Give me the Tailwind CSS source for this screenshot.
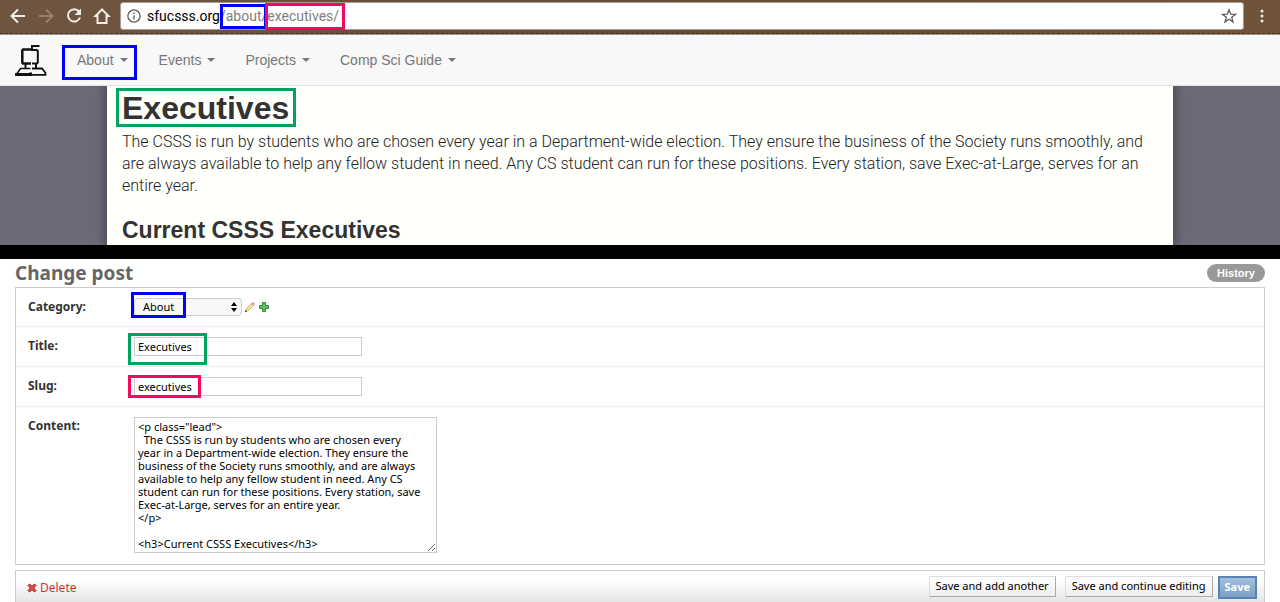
<!DOCTYPE html>
<html lang="en">
<head>
<meta charset="utf-8">
<meta name="viewport" content="width=device-width, initial-scale=1">
<title>Executives</title>
<script src="https://cdn.jsdelivr.net/npm/@tailwindcss/browser@4"></script>
</head>
<body class="flex min-h-screen flex-col bg-white font-['Liberation_Sans',Arial,sans-serif]">

<!-- Browser toolbar -->
<header class="relative flex h-[35px] shrink-0 items-start bg-linear-to-r from-[#705540] via-[#664c36] to-[#705339] pt-[2px] pr-3 pl-2">
  <div class="absolute inset-x-0 bottom-[1px] border-t border-dashed border-[#463322]"></div>
  <div class="absolute inset-x-0 bottom-0 h-px bg-[#a39586]"></div>
  <div class="flex h-7 w-[112px] items-center gap-2">
    <button aria-label="Back" class="size-5"><svg viewBox="0 0 20 20" class="size-5" fill="none" stroke="#f1ece6" stroke-width="2"><path d="M17 10H4M10 3.500 3.500 10l6.500 6.500"/></svg></button>
    <button aria-label="Forward" class="size-5"><svg viewBox="0 0 20 20" class="size-5" fill="none" stroke="#95816d" stroke-width="2"><path d="M3 10h13M10 3.500l6.500 6.500-6.500 6.500"/></svg></button>
    <button aria-label="Reload" class="size-5"><svg viewBox="0 0 20 20" class="size-5" fill="none" stroke="#f1ece6" stroke-width="2"><path d="M15 5.500A6.200 6.200 0 1 0 16 11.500"/><path d="M17 2.500v6.500h-6.500z" fill="#f1ece6" stroke="none"/></svg></button>
    <button aria-label="Home" class="size-5"><svg viewBox="0 0 20 20" class="size-5" fill="none" stroke="#f1ece6" stroke-width="2"><path d="M10 3.500 3.500 10H5.500v7h9v-7h2z"/></svg></button>
  </div>
  <div class="flex h-7 flex-1 items-center rounded-[3px] border border-[#a79c91] bg-white px-[6px] font-[Roboto,sans-serif] text-[14px] leading-5 text-[#808080]">
    <svg viewBox="0 0 16 16" class="mr-[6px] size-[14px]" fill="none" stroke="#5a5a5a" stroke-width="1.500"><circle cx="8" cy="8" r="7"/><path d="M8 7v5M8 3.800v1.800"/></svg>
    <span class="text-black">sfucsss.org</span>
    <span class="relative">/about/<span class="absolute -top-[2px] right-0 -bottom-[3px] left-0 border-3 border-[#0000ff]"></span></span>
    <span class="relative">executives/<span class="absolute -top-[3px] -right-[6px] -bottom-[4px] -left-[2px] border-3 border-[#f5085f]"></span></span>
    <button aria-label="Bookmark" class="ml-auto size-4"><svg viewBox="0 0 16 16" class="size-4" fill="none" stroke="#5a5a5a" stroke-width="1.300"><path d="m8 1.800 1.700 4.400 4.700.2-3.700 2.900 1.300 4.600L8 11.300l-4 2.600 1.300-4.600L1.600 6.400l4.700-.2z"/></svg></button>
  </div>
  <button aria-label="Menu" class="ml-3 flex h-7 w-3 items-center justify-center"><svg viewBox="0 0 4 14" class="h-[14px] w-1" fill="#f1ece6"><circle cx="2" cy="2" r="1.500"/><circle cx="2" cy="7" r="1.500"/><circle cx="2" cy="12" r="1.500"/></svg></button>
</header>

<!-- Site navigation -->
<nav class="flex h-[51px] shrink-0 items-center border-b border-[#e2e2e2] bg-[#f8f8f8] pl-[15px] text-sm text-[#777]">
  <a href="#" aria-label="Home page" class="mr-[15px]"><svg viewBox="0 0 32 32" class="size-8" fill="none" stroke="#111"><path d="M16 5.500H8L7.300 6.500v12l.7 1H16" stroke-width="2.500"/><path d="M24.500 2H17v4h4.800l1 1V18.500l-1 1H17" stroke-width="2"/><path d="M10.500 20v4M21 20v4" stroke-width="2"/><path d="M15.500 24.500H5.500L2 29.500" stroke-width="1.500"/><path d="M0 30.500h15.500v-2" stroke-width="3"/><path d="M17 24.500H27l3.500 4.500V30.800H17" stroke-width="1.800"/></svg></a>
  <a href="#" class="relative mr-[31px] ml-[15px] flex items-center gap-[6px]">About<svg viewBox="0 0 8 4" class="h-1 w-2 fill-[#777]"><path d="M0 0h8L4 4z"/></svg><span class="absolute -top-[5px] -right-[9px] -bottom-[10px] -left-[15px] border-3 border-[#0000ff]"></span></a>
  <a href="#" class="mr-[30px] flex items-center gap-[6px]">Events<svg viewBox="0 0 8 4" class="h-1 w-2 fill-[#777]"><path d="M0 0h8L4 4z"/></svg></a>
  <a href="#" class="mr-[30px] flex items-center gap-[6px]">Projects<svg viewBox="0 0 8 4" class="h-1 w-2 fill-[#777]"><path d="M0 0h8L4 4z"/></svg></a>
  <a href="#" class="flex items-center gap-[6px]">Comp Sci Guide<svg viewBox="0 0 8 4" class="h-1 w-2 fill-[#777]"><path d="M0 0h8L4 4z"/></svg></a>
</nav>

<!-- Published page -->
<section class="h-[159px] shrink-0 overflow-hidden bg-[#6b6a77] px-[107px]">
  <div class="h-full bg-[#fffffb] px-[15px] pt-[3px] text-[#333] shadow-[0_0_10px_2px_rgba(40,40,50,0.6)]">
    <h1 class="relative w-fit text-[32px] leading-[38px] font-bold">Executives<span class="absolute -top-px -right-[7px] bottom-0 -left-[6px] border-3 border-[#00a35e]"></span></h1>
    <p class="mt-1 font-[Roboto,sans-serif] text-[16px] leading-[22px] font-light text-[#222]">The CSSS is run by students who are chosen every year in a Department-wide election. They ensure the business of the Society runs smoothly, and<br>are always available to help any fellow student in need. Any CS student can run for these positions. Every station, save Exec-at-Large, serves for an<br>entire year.</p>
    <h3 class="mt-[19px] text-[23px] leading-7 font-bold">Current CSSS Executives</h3>
  </div>
</section>
<div class="h-[14px] shrink-0 bg-black"></div>

<!-- Post editor -->
<main class="flex flex-1 flex-col px-[15px] font-['Noto_Sans',sans-serif] text-[11px] text-[#333]">
  <div class="flex h-7 items-center justify-between">
    <h2 class="text-[19px] leading-6 font-bold text-[#666]">Change post</h2>
    <a href="#" class="rounded-full bg-[#999] px-[10px] font-['Liberation_Sans',sans-serif] text-[11px] leading-[18px] font-bold text-white">History</a>
  </div>
  <form class="flex flex-1 flex-col">
    <div class="border border-[#ccc]">
      <div class="flex h-[39px] items-center border-b border-[#eee] px-3">
        <label for="category" class="w-[106px] text-[12px] font-bold">Category:</label>
        <div class="relative flex items-center">
          <select id="category" class="h-[18px] w-[108px] appearance-none rounded-[4px] border border-[#ccc] bg-[#f8f8f8] pl-2 text-[11px] leading-4 text-black"><option>About</option></select>
          <svg viewBox="0 0 6 10" class="pointer-events-none absolute left-[97px] h-[10px] w-[6px] fill-black"><path d="M3 0l3 4H0zM0 6h6l-3 4z"/></svg>
          <span class="pointer-events-none absolute -top-[6px] -left-[3px] h-[26px] w-[55px] border-3 border-[#0000ff]"></span>
        </div>
        <button type="button" aria-label="Edit category" class="ml-[3px] size-[10px]"><svg viewBox="0 0 10 10" class="size-[10px]"><path d="M1 7 7 1l2 2-6 6-2.500.5z" fill="#f7dc8c" stroke="#b49a59" stroke-width=".6"/><path d="M6.300 1.700 8 0l2 2-1.700 1.700z" fill="#eb8bd0"/><path d="M0 10l.5-2L2 9.500z" fill="#222"/></svg></button>
        <button type="button" aria-label="Add category" class="ml-1 size-[10px]"><svg viewBox="0 0 10 10" class="size-[10px]"><path d="M3.500.5h3v3h3v3h-3v3h-3v-3h-3v-3h3z" fill="#63bd58" stroke="#2e8d35"/></svg></button>
      </div>
      <div class="flex h-10 items-center border-b border-[#eee] px-3">
        <label for="title" class="w-[106px] pb-[2px] text-[12px] font-bold">Title:</label>
        <div class="relative flex">
          <input id="title" value="Executives" class="h-[19px] w-[228px] border border-[#ccc] px-[3px] text-[11px] text-black">
          <span class="pointer-events-none absolute -top-1 -left-[6px] h-[32px] w-[79px] border-3 border-[#00a35e]"></span>
        </div>
      </div>
      <div class="flex h-10 items-center border-b border-[#eee] px-3">
        <label for="slug" class="w-[106px] pb-[2px] text-[12px] font-bold">Slug:</label>
        <div class="relative flex">
          <input id="slug" value="executives" class="h-[19px] w-[228px] border border-[#ccc] px-[3px] text-[11px] text-black">
          <span class="pointer-events-none absolute -top-[2px] -left-[6px] h-[23px] w-[73px] border-3 border-[#f5085f]"></span>
        </div>
      </div>
      <div class="flex items-start px-3 pt-[10px] pb-[11px]">
        <label for="content" class="w-[106px] text-[12px] leading-[18px] font-bold">Content:</label>
        <textarea id="content" class="h-[136px] w-[303px] overflow-hidden border border-[#ccc] px-[3px] py-[2px] text-[11px] leading-[13px] whitespace-pre text-black">&lt;p class="lead"&gt;
  The CSSS is run by students who are chosen every
year in a Department-wide election. They ensure the
business of the Society runs smoothly, and are always
available to help any fellow student in need. Any CS
student can run for these positions. Every station, save
Exec-at-Large, serves for an entire year.
&lt;/p&gt;

&lt;h3&gt;Current CSSS Executives&lt;/h3&gt;</textarea>
      </div>
    </div>
    <div class="mt-[5px] flex flex-1 items-start justify-between border border-b-0 border-[#ccc] bg-linear-to-b from-white from-30% to-[#e5e5e5] pt-[5px] pr-[7px] pl-[11px]">
      <a href="#" class="flex h-6 items-center gap-[3px] text-[12px] text-[#cc3434]"><svg viewBox="0 0 10 10" class="size-[10px]"><path d="M2.500 1 5 3.300 7.500 1 9 2.500 6.700 5 9 7.500 7.500 9 5 6.700 2.500 9 1 7.500 3.300 5 1 2.500z" fill="#e34b4b" stroke="#a51e1e"/></svg>Delete</a>
      <div class="flex items-start">
        <button type="button" class="mr-[9px] h-[21px] border border-[#ddd] border-r-[#aaa] border-b-[#aaa] bg-linear-to-b from-white to-[#eee] px-[6px] text-black">Save and add another</button>
        <button type="button" class="mr-[5px] h-[21px] border border-[#ddd] border-r-[#aaa] border-b-[#aaa] bg-linear-to-b from-white to-[#eee] px-[6px] text-black">Save and continue editing</button>
        <button type="submit" class="h-[23px] border-2 border-[#5b80b2] bg-linear-to-b from-[#a3bfdc] to-[#7ca0c7] px-[5px] font-bold text-white">Save</button>
      </div>
    </div>
  </form>
</main>
</body>
</html>
